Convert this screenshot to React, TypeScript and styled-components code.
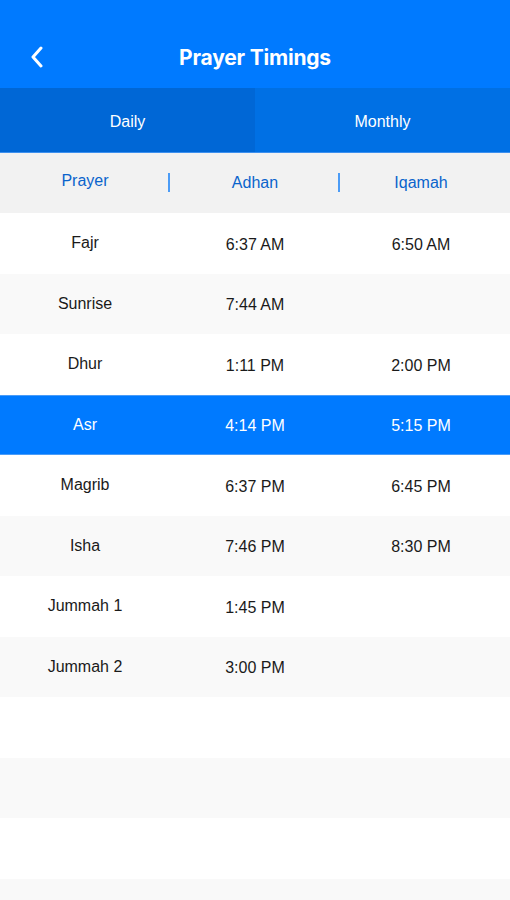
import styled, { createGlobalStyle } from 'styled-components';

const GlobalStyle = createGlobalStyle`
  html, body {
    margin: 0;
    padding: 0;
    background: #ffffff;
  }
  * {
    box-sizing: border-box;
  }
`;

const Screen = styled.div`
  width: 510px;
  height: 900px;
  overflow: hidden;
  background: #ffffff;
  font-family: "Liberation Sans", Arial, sans-serif;
`;

const TopBar = styled.header`
  position: relative;
  height: 88px;
  background: #007aff;
  display: flex;
  align-items: center;
  justify-content: center;
`;

const BackButton = styled.button`
  position: absolute;
  left: 24px;
  top: 42px;
  width: 26px;
  height: 30px;
  padding: 0;
  border: none;
  background: transparent;
  display: flex;
  align-items: center;
  justify-content: center;
`;

const Title = styled.h1`
  margin: 0;
  padding-top: 26px;
  color: #ffffff;
  font-family: Inter, "Noto Sans", sans-serif;
  font-size: 21px;
  font-weight: 700;
  letter-spacing: -0.2px;
`;

const Tabs = styled.nav`
  display: grid;
  grid-template-columns: 1fr 1fr;
  height: 65px;
  border-bottom: 1px solid #3d90ef;
`;

const Tab = styled.div<{ $active?: boolean }>`
  display: flex;
  align-items: center;
  justify-content: center;
  padding-top: 4px;
  background: ${(p) => (p.$active ? '#0067d6' : '#0070e4')};
  color: #ffffff;
  font-size: 16px;
`;

const HeadRow = styled.div`
  display: grid;
  grid-template-columns: 1fr 1fr 1fr;
  height: 60px;
  background: #f2f2f2;
  color: #0a64cc;
  font-size: 16px;
`;

const HeadCell = styled.div<{ $divider?: boolean; $shift?: number }>`
  position: relative;
  display: flex;
  align-items: center;
  justify-content: center;
  padding-right: ${(p) => (p.$shift ?? 0) * 2}px;

  &::before {
    content: '';
    display: ${(p) => (p.$divider ? 'block' : 'none')};
    position: absolute;
    left: -2px;
    top: 20px;
    width: 2px;
    height: 19px;
    background: #4c9cf6;
  }
`;

const Row = styled.div<{ $tone: 'white' | 'grey' | 'active' }>`
  display: grid;
  grid-template-columns: 1fr 1fr 1fr;
  height: 60.5px;
  font-size: 16px;
  background: ${(p) =>
    p.$tone === 'active' ? '#007aff' : p.$tone === 'grey' ? '#f9f9f9' : '#ffffff'};
  color: ${(p) => (p.$tone === 'active' ? '#ffffff' : '#1a1a1a')};
  box-shadow: ${(p) =>
    p.$tone === 'active' ? 'inset 0 1px 0 #4a9cf8, inset 0 -1px 0 #4a9cf8' : 'none'};
`;

const Cell = styled.div<{ $name?: boolean; $shift?: number }>`
  display: flex;
  align-items: center;
  justify-content: center;
  padding-top: ${(p) => (p.$name ? '0' : '3px')};
  padding-right: ${(p) => (p.$shift ?? 0) * 2}px;
`;

const timings = [
  { name: 'Fajr', adhan: '6:37 AM', iqamah: '6:50 AM' },
  { name: 'Sunrise', adhan: '7:44 AM', iqamah: '' },
  { name: 'Dhur', adhan: '1:11 PM', iqamah: '2:00 PM' },
  { name: 'Asr', adhan: '4:14 PM', iqamah: '5:15 PM', active: true },
  { name: 'Magrib', adhan: '6:37 PM', iqamah: '6:45 PM' },
  { name: 'Isha', adhan: '7:46 PM', iqamah: '8:30 PM' },
  { name: 'Jummah 1', adhan: '1:45 PM', iqamah: '' },
  { name: 'Jummah 2', adhan: '3:00 PM', iqamah: '' },
];

const emptyRows = 4;

export default function App() {
  return (
    <Screen>
      <GlobalStyle />
      <TopBar>
        <BackButton aria-label="Back">
          <svg width="14" height="22" viewBox="0 0 14 22" fill="none">
            <path
              d="M11 2 L3 11 L11 20"
              stroke="#ffffff"
              strokeWidth="3"
              strokeLinecap="round"
              strokeLinejoin="round"
            />
          </svg>
        </BackButton>
        <Title>Prayer Timings</Title>
      </TopBar>

      <Tabs>
        <Tab $active>Daily</Tab>
        <Tab>Monthly</Tab>
      </Tabs>

      <HeadRow>
        <HeadCell>
          <span style={{ marginTop: -4 }}>Prayer</span>
        </HeadCell>
        <HeadCell $divider>Adhan</HeadCell>
        <HeadCell $divider $shift={4}>Iqamah</HeadCell>
      </HeadRow>

      {timings.map((t, i) => (
        <Row key={t.name} $tone={t.active ? 'active' : i % 2 ? 'grey' : 'white'}>
          <Cell $name>{t.name}</Cell>
          <Cell>{t.adhan}</Cell>
          <Cell $shift={4}>{t.iqamah}</Cell>
        </Row>
      ))}

      {Array.from({ length: emptyRows }).map((_, i) => (
        <Row key={`empty-${i}`} $tone={(timings.length + i) % 2 ? 'grey' : 'white'} />
      ))}
    </Screen>
  );
}
